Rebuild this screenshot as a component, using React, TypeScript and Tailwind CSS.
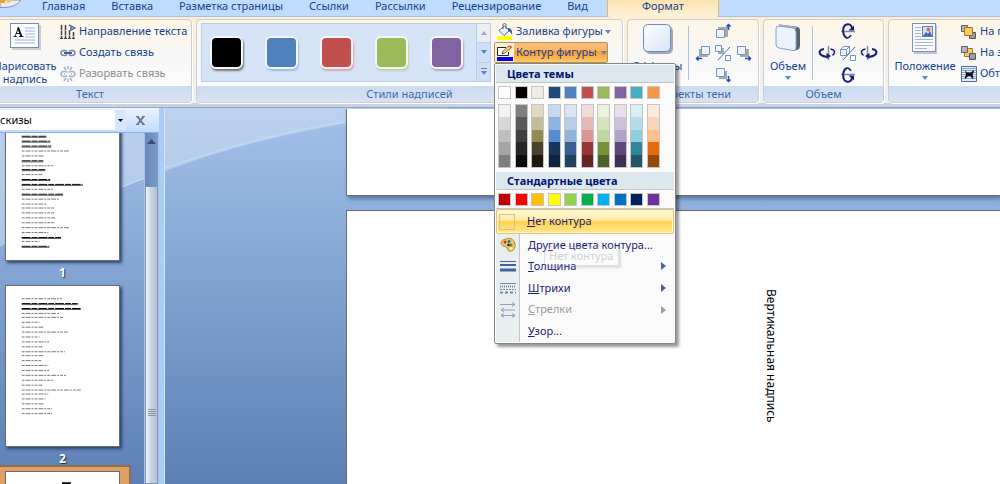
import type { ReactNode } from 'react';
import clsx from 'clsx';

const tabs = ['Главная', 'Вставка', 'Разметка страницы', 'Ссылки', 'Рассылки', 'Рецензирование', 'Вид'];

const styles = [
  { name: 'Черный', color: 'bg-black', shadow: 'shadow-[1px_2px_2px_#777]' },
  { name: 'Синий', color: 'bg-[#4f81bd]', shadow: 'shadow-[1px_2px_2px_#9dbce0]' },
  { name: 'Красный', color: 'bg-[#c0504d]', shadow: 'shadow-[1px_2px_2px_#dba5ad]' },
  { name: 'Зеленый', color: 'bg-[#9bbb59]', shadow: 'shadow-[1px_2px_2px_#bdd0a6]' },
  { name: 'Фиолетовый', color: 'bg-[#8064a2]', shadow: 'shadow-[1px_2px_2px_#b0a6cc]' },
];

// first colour is the base one, the others are its tints and shades
const themeColors = [
  ['#ffffff', '#f2f2f2', '#d8d8d8', '#bfbfbf', '#a5a5a5', '#7f7f7f'],
  ['#000000', '#7f7f7f', '#595959', '#3f3f3f', '#262626', '#0c0c0c'],
  ['#eeece1', '#ddd9c3', '#c4bd97', '#938953', '#494429', '#1d1b10'],
  ['#1f497d', '#c6d9f0', '#8db3e2', '#548dd4', '#17365d', '#0f243e'],
  ['#4f81bd', '#dbe5f1', '#b8cce4', '#95b3d7', '#366092', '#244061'],
  ['#c0504d', '#f2dcdb', '#e5b9b7', '#d99694', '#953734', '#632423'],
  ['#9bbb59', '#ebf1dd', '#d7e3bc', '#c3d69b', '#76923c', '#4f6128'],
  ['#8064a2', '#e5e0ec', '#ccc1d9', '#b2a2c7', '#5f497a', '#3f3151'],
  ['#4bacc6', '#dbeef3', '#b7dde8', '#92cddc', '#31859b', '#205867'],
  ['#f79646', '#fdeada', '#fbd5b5', '#fac08f', '#e36c09', '#974806'],
];

const standardColors = [
  '#c00000', '#ff0000', '#ffc000', '#ffff00', '#92d050',
  '#00b050', '#00b0f0', '#0070c0', '#002060', '#7030a0',
];

// width of each text line on a thumbnail, negative for bold lines
const pageOne = [
  49, 30, 40, 26, -51, -25, -29, -30, 49, 22, -22, 32, -24, 21, -29, -62, 32, -42, 39, 25, 33, 33, 34, 33, 49, 27, -40,
  18, -28,
];
const pageTwo = [
  41, -57, -60, 38, 42, 18, 23, 47, 18, 28, 21, 44, 23, 20, 27, 28, 45, 32, 21, 60, 27, 24, 23, 31, 31,
];

function Caret() {
  return (
    <svg width="6" height="4" viewBox="0 0 6 4" className="shrink-0">
      <path d="M0 0h6L3 4z" fill="#5b86bf" />
    </svg>
  );
}

function TextBoxIcon() {
  return (
    <svg width="31" height="27" viewBox="0 0 31 27">
      <rect x="2" y="2" width="29" height="25" fill="#9aa5b8" opacity=".5" />
      <rect x=".5" y=".5" width="28" height="24" fill="#fdfeff" stroke="#6f8fbf" />
      <path d="M15 5h10M15 8h10M15 11h10M5 17h20M5 20h20" stroke="#9bb4dc" />
      <path d="M15 14h10" stroke="#9bb4dc" />
      <path d="M3.500 13.500h3M9 13.500h4.500M5 13.500L8.500 4.500M6 10.500h4.500" fill="none" stroke="#222" />
      <path d="M8 4.500l3.500 9" stroke="#111" strokeWidth="2" />
    </svg>
  );
}

function TextDirectionIcon() {
  return (
    <svg width="16" height="16" viewBox="0 0 16 16">
      <path d="M1.500 1v13M5.500 1v13" stroke="#444" strokeWidth="1.500" strokeDasharray="5 .5" />
      <path d="M9.500 7v7M13.500 8v6" stroke="#444" strokeWidth="1.500" strokeDasharray="4 .5" />
      <path d="M9 1l6 3-6 3M11 2v4" fill="none" stroke="#5a6ea6" strokeWidth="1.500" />
      <path d="M0 14.500h3M4 14.500h3M8 14.500h3M12 14.500h3" stroke="#444" />
    </svg>
  );
}

function LinkIcon({ broken }: { broken?: boolean }) {
  return (
    <svg width="16" height="16" viewBox="0 0 16 16" fill="none" stroke={broken ? '#a3b2cc' : '#7186a8'} strokeWidth="1.500">
      <path d="M7 6.500C6 5 1 5 1 8s5 3 6 1.500M9 6.500C10 5 15 5 15 8s-5 3-6 1.500" />
      {broken ? (
        <path d="M4 1l2 3M12 1l-2 3M8 0v3M4 15l2-3M12 15l-2-3M8 13v3M4 8h1M11 8h1" />
      ) : (
        <path d="M4 8h8" stroke="#4b5f86" strokeWidth="2" />
      )}
    </svg>
  );
}

function FillIcon() {
  return (
    <svg width="18" height="18" viewBox="0 0 18 18">
      <rect x="1" y="13" width="15" height="4" fill="#ffff00" />
      <path d="M3 7.500L8.500 3l5 4.500-5.500 5z" fill="#eef4fb" stroke="#5b7194" />
      <path d="M7 6V2c0-2 3-2 3 0v4" fill="none" stroke="#4a5d7c" />
      <path d="M12 5c3 0 4.500 2 4 7-1-2-2-3.500-4-4z" fill="#3a5f9c" />
    </svg>
  );
}

function OutlineIcon() {
  return (
    <svg width="18" height="18" viewBox="0 0 18 18">
      <rect x="1" y="13" width="16" height="4" fill="#0000f0" />
      <path d="M10 3.500H1.500v8h11V8" fill="#fff" stroke="#222" />
      <path d="M6 10l1-3 6-5 2 2-6 5z" fill="#f3d47c" stroke="#6d5320" strokeWidth=".8" />
      <path d="M12.500 2.500L14 1l2.500 2L15 4.500z" fill="#d7655a" />
      <path d="M6 10l.5-1.500 1 1z" fill="#222" />
    </svg>
  );
}

function EffectsIcon() {
  return (
    <svg width="32" height="32" viewBox="0 0 32 32">
      <defs>
        <linearGradient id="fx" x1="0" y1="0" x2="1" y2="1">
          <stop offset="0" stopColor="#fff" />
          <stop offset="1" stopColor="#d6e3f8" />
        </linearGradient>
      </defs>
      <rect x="3" y="3" width="28" height="28" rx="5" fill="#6d7583" opacity=".6" />
      <rect x="1.500" y="1.500" width="27" height="27" rx="4" fill="url(#fx)" stroke="#6c8cc4" />
    </svg>
  );
}

function VolumeIcon() {
  return (
    <svg width="28" height="30" viewBox="0 0 28 30">
      <path d="M5 1.500l17 2q4 .5 4 4V22q0 4-3 5l-4 1z" fill="#59616e" />
      <path d="M4 3l2.500-1.500L23 4l-2 2z" fill="#a9b3c2" />
      <path d="M5 3l14 2q3 .5 3 4v15q0 4-3 3.500L5 25q-3-.5-3-4V6q0-3.500 3-3z" fill="#edf3fd" stroke="#86a2d2" />
    </svg>
  );
}

function PositionIcon() {
  return (
    <svg width="26" height="32" viewBox="0 0 26 32">
      <rect x="2" y="2" width="23" height="29" fill="#99a3b5" opacity=".6" />
      <rect x=".5" y=".5" width="23" height="28" fill="#f8fafd" stroke="#7f93b6" />
      <path d="M3 4.500h6M3 7.500h6M3 10.500h6M3 13.500h6M3 16.500h18M3 19.500h18M3 22.500h18M3 25.500h12" stroke="#a7b3c8" />
      <rect x="10.500" y="3.500" width="10" height="10" fill="#cfe2f8" stroke="#5f7fb4" />
      <path d="M11 13l3-4 2 2 2-3 2 5z" fill="#4469a6" />
      <circle cx="16.500" cy="6.500" r="2" fill="#e2703c" />
    </svg>
  );
}

const nudgePaths = {
  up: { shadow: 'M4 5h10v10H4z', face: 'M2.500 7.500h8v8h-8z', arrow: 'M14.500 2v6M12.500 4.500l2-2 2 2' },
  down: { shadow: 'M5 5h8v8H5z', face: 'M2.500 2.500h8v8h-8z', arrow: 'M14.500 10v6M12.500 13.500l2 2 2-2' },
  left: { shadow: 'M5 5h9v8H5z', face: 'M7.500 2.500h8v8h-8z', arrow: 'M8 14.500H2M4.500 12.500l-2 2 2 2' },
  right: { shadow: 'M5 5h9v8H5z', face: 'M2.500 2.500h8v8h-8z', arrow: 'M10 14.500h6M13.500 12.500l2 2-2 2' },
};

function NudgeIcon({ dir }: { dir: keyof typeof nudgePaths }) {
  const { shadow, face, arrow } = nudgePaths[dir];
  return (
    <svg width="18" height="18" viewBox="0 0 18 18" fill="none">
      <path d={shadow} fill="#aaa9a6" />
      <path d={face} fill="#eef5ff" stroke="#6e93c4" />
      <path d={arrow} stroke="#1c50c0" strokeWidth="1.500" />
    </svg>
  );
}

function ToggleIcon({ cube }: { cube?: boolean }) {
  return (
    <svg width="18" height="18" viewBox="0 0 18 18" fill="none" stroke="#6e93c4">
      {cube ? (
        <path d="M1.500 5.500h6v6h-6zM1.500 5.500l3-3h6l-3 3M10.500 2.500v6l-3 3" fill="#eef5ff" />
      ) : (
        <>
          <path d="M4 4h6v6H4z" fill="#aaa9a6" stroke="none" />
          <path d="M1.500 1.500h6v6h-6z" fill="#eef5ff" />
        </>
      )}
      <path d="M11.500 11.500h5v5h-5z" fill="#fff" />
      <path d="M4 16L16 3" stroke="#4676bb" />
    </svg>
  );
}

function TiltIcon({ dir }: { dir: 'up' | 'down' | 'left' | 'right' }) {
  if (dir === 'up' || dir === 'down') {
    return (
      <svg width="18" height="18" viewBox="0 0 18 18" fill="none" className={clsx(dir === 'down' && '-scale-y-100')}>
        <path d="M2 9.500h14" stroke="#7f8ca3" strokeWidth="1.500" />
        <path d="M8 16C3 14 3 4 7.500 2.500 10 1.500 12.500 3 13 6" stroke="#1c1c7c" strokeWidth="2" />
        <path d="M9.500 8.500h5.500V3.500z" fill="#1c1c7c" />
        <path d="M8 16c2 0 3-1 4-3" stroke="#1c1c7c" strokeWidth="1.500" />
      </svg>
    );
  }
  return (
    <svg width="18" height="18" viewBox="0 0 18 18" fill="none" className={clsx(dir === 'right' && '-scale-x-100')}>
      <path d="M10.500 2v14" stroke="#7f8ca3" strokeWidth="1.500" />
      <path d="M6 5C1 6 0 9 4 11.500c2 1 4 1.500 6 1" stroke="#1c1c7c" strokeWidth="2" />
      <path d="M8.500 9v6l4.500-3z" fill="#1c1c7c" />
      <path d="M12.500 5c5 1 5 4 2 6.500" stroke="#1c1c7c" strokeWidth="1.500" />
    </svg>
  );
}

function OrderIcon({ front }: { front?: boolean }) {
  const gold = <path d="M3.500 3.500h8v8h-8z" fill="#f9c95e" stroke="#a27a25" />;
  return (
    <svg width="16" height="16" viewBox="0 0 16 16">
      {!front && gold}
      <path d="M.5 1.500h6v6h-6z" fill="#b3b5ba" stroke="#5f6167" />
      <path d="M8.500 8.500h6v6h-6z" fill="#9a9ca2" stroke="#54565c" />
      {front && gold}
    </svg>
  );
}

function WrapIcon() {
  return (
    <svg width="16" height="16" viewBox="0 0 16 16">
      <path d="M.5.5h15v15H.5z" fill="#e4edfa" stroke="#4d6ea6" />
      <path d="M1 2.500h14M1 4.500h14M1 6.500h14M1 8.500h14M1 10.500h14M1 12.500h14" stroke="#8ca6d0" />
      <path d="M4 4l2 2.500h4L12.500 4l.5 2-1.500 2 1 4.500H11L9.500 10H7l-2 2.500H3.500L5 8.500z" fill="#111" />
    </svg>
  );
}

function Group({ label, className, children }: { label: string; className?: string; children: ReactNode }) {
  return (
    <section
      className={clsx(
        'flex shrink-0 flex-col rounded-sm border border-[#cbcdd2] bg-gradient-to-b from-[#fdf6e6] via-[#f7f7f8] to-white shadow-[1px_1px_0_#fff]',
        className,
      )}
    >
      <div className="flex h-[66px] shrink-0">{children}</div>
      <h2 className="h-4 bg-gradient-to-b from-[#cbdbf1] to-[#d9e2f3] text-center leading-4 whitespace-nowrap text-[#3e6aaa]">{label}</h2>
    </section>
  );
}

function BigButton({ icon, className, children }: { icon: ReactNode; className?: string; children: ReactNode }) {
  return (
    <button type="button" className={clsx('flex flex-col items-center pt-[3px] leading-[13px]', className)}>
      <span className="flex h-9 items-start justify-center">{icon}</span>
      {children}
    </button>
  );
}

function SmallButton({ icon, disabled, children }: { icon: ReactNode; disabled?: boolean; children: ReactNode }) {
  return (
    <button
      type="button"
      disabled={disabled}
      className="flex h-[21px] items-center gap-[3px] whitespace-nowrap disabled:text-[#8d8d8d]"
    >
      {icon}
      {children}
    </button>
  );
}

function MenuHeader({ children }: { children: ReactNode }) {
  return (
    <h3 className="h-[18px] border-b border-[#c5c5c5] bg-[#dde7ee] pl-[11px] font-bold leading-[18px] text-[#00156e]">{children}</h3>
  );
}

function MenuItem({ icon, hotkey, rest, before, submenu, disabled }: {
  icon?: ReactNode;
  hotkey: string;
  rest: string;
  before?: string;
  submenu?: boolean;
  disabled?: boolean;
}) {
  return (
    <button
      type="button"
      role="menuitem"
      disabled={disabled}
      className="group flex w-full flex-1 items-center pr-2 text-left text-[#1b2177] disabled:text-[#9c9c9c]"
    >
      <span className="flex w-6 shrink-0 justify-center">{icon}</span>
      <span className="flex-1 pl-2">
        {before}
        <u>{hotkey}</u>
        {rest}
      </span>
      {submenu && (
        <svg width="5" height="8" viewBox="0 0 5 8">
          <path d="M0 0l5 4-5 4z" className="fill-[#4a62a5] group-disabled:fill-[#9c9c9c]" />
        </svg>
      )}
    </button>
  );
}

function PaletteIcon() {
  return (
    <svg width="16" height="16" viewBox="0 0 16 16">
      <path d="M6 2c5-2 9 1 9 6s-3 7-6 6c-2-1-1-3-3-4S1 9 1 6s2-3 5-4z" fill="#f0c560" stroke="#b98c32" />
      <circle cx="5" cy="5" r="1.500" fill="#c3342c" />
      <circle cx="9" cy="4.500" r="1.500" fill="#3568bd" />
      <circle cx="11" cy="8" r="1.500" fill="#2c9b45" />
      <circle cx="8.500" cy="8" r="1.300" fill="#222" />
      <circle cx="11" cy="11.500" r="1.300" fill="#fff3c8" />
    </svg>
  );
}

function OutlineMenu() {
  return (
    <div
      role="menu"
      className="absolute top-full left-0 z-10 w-[182px] rounded-xs border border-[#868686] bg-[#fafafa] p-px shadow-[3px_3px_3px_#00000066]"
    >
      <MenuHeader>Цвета темы</MenuHeader>
      <div className="flex justify-between pt-[3px] pr-[14px] pb-1 pl-[2px]">
        {themeColors.map(([base, ...tints]) => (
          <div key={base} className="flex flex-col gap-[5px]">
            <button type="button" aria-label={base} className="size-[13px] border border-[#c5c5c5]" style={{ background: base }} />
            <div className="flex h-16 w-[13px] flex-col border border-[#c5c5c5]">
              {tints.map((tint) => (
                <button key={tint} type="button" aria-label={tint} className="flex-1" style={{ background: tint }} />
              ))}
            </div>
          </div>
        ))}
      </div>
      <MenuHeader>Стандартные цвета</MenuHeader>
      <div className="flex justify-between border-b border-[#c5c5c5] pt-[3px] pr-[14px] pb-[2px] pl-[2px]">
        {standardColors.map((color) => (
          <button key={color} type="button" aria-label={color} className="size-[13px] border border-[#c5c5c5]" style={{ background: color }} />
        ))}
      </div>
      <button
        type="button"
        role="menuitem"
        className="flex h-[25px] w-full items-center rounded-xs border border-[#dcc47c] bg-[linear-gradient(#fffbe0,#ffe9a0_45%,#ffd34f_50%,#ffe68e)] pl-[2px] text-[#1b2177] inset-shadow-[0_0_1px_1px_#fff6c4]"
      >
        <span className="size-4 border border-[#d5c48a]" />
        <span className="pl-3">
          <u>Н</u>ет контура
        </span>
      </button>
      <div className="relative flex h-[108px] flex-col bg-[linear-gradient(90deg,#e9eeee_23px,#c5c5c5_23px,#c5c5c5_24px,transparent_24px)]">
        <MenuItem icon={<PaletteIcon />} before="Дру" hotkey="г" rest="ие цвета контура..." />
        <MenuItem
          icon={
            <svg width="16" height="12" viewBox="0 0 16 12" stroke="#45649f">
              <path d="M0 1.500h16" />
              <path d="M0 5h16" strokeWidth="2" />
              <path d="M0 10h16" strokeWidth="3" />
            </svg>
          }
          hotkey="Т"
          rest="олщина"
          submenu
        />
        <MenuItem
          icon={
            <svg width="16" height="12" viewBox="0 0 16 12" stroke="#7287ad">
              <path d="M0 1.500h16" />
              <path d="M0 4.500h16" strokeDasharray="1 1" strokeWidth="2" />
              <path d="M0 7.500h16" strokeDasharray="2 1" />
              <path d="M0 10.500h16" strokeDasharray="3 2" strokeWidth="2" />
            </svg>
          }
          hotkey="Ш"
          rest="трихи"
          submenu
        />
        <MenuItem
          icon={
            <svg width="16" height="16" viewBox="0 0 16 16" fill="none" stroke="#8fa2c2">
              <path d="M0 2.500h15M12 .5l3 2-3 2M15 8H1M4 6L1 8l3 2M1 13.500h14M4 11.500l-3 2 3 2M12 11.500l3 2-3 2" />
            </svg>
          }
          hotkey="С"
          rest="трелки"
          submenu
          disabled
        />
        <MenuItem hotkey="У" rest="зор..." />
        {/* tooltip fading out over the items */}
        <span
          role="tooltip"
          className="absolute top-3 left-12 rounded-xs border border-[#999] bg-white/50 px-1 leading-[18px] text-[#555] opacity-25 shadow-[2px_2px_2px_#888]"
        >
          Нет контура
        </span>
      </div>
    </div>
  );
}

function Thumbnail({ number, lines }: { number: number; lines: number[] }) {
  return (
    <a href={`#page-${number}`} className="block w-[115px] text-center text-xs leading-6 font-bold text-white [text-shadow:1px_1px_1px_#234]">
      <svg width="115" height="162" viewBox="0 0 115 162" className="block border border-[#6c6c6c] bg-white shadow-[2px_2px_3px_#2b4470]">
        {lines.map((width, i) => {
          const y = 12 + Math.round(i * 4.87);
          return (
            <g key={i}>
              <path
                d={`M16 ${y}.5h${Math.abs(width)}`}
                stroke={width < 0 ? '#000' : '#777'}
                strokeDasharray={width < 0 ? '9 1 6 1' : '3 1 5 1 2 1'}
              />
              {width < 0 && <path d={`M16 ${y + 1}.5h${-width}`} stroke="#555" />}
            </g>
          );
        })}
      </svg>
      {number}
    </a>
  );
}

function Sidebar() {
  return (
    <aside className="flex w-[159px] shrink-0 flex-col">
      <div className="flex h-6 shrink-0 items-center bg-gradient-to-b from-[#eaf3ff] to-[#c3dbfb]">
        <div className="relative -ml-2 flex h-5 w-[134px] items-center bg-white">
          <select aria-label="Область" defaultValue="thumbs" className="h-full w-full appearance-none pl-px text-black">
            <option value="thumbs">Эскизы</option>
            <option value="map">Схема документа</option>
          </select>
          <span className="pointer-events-none absolute right-0 flex h-full w-[11px] items-center justify-center bg-[#d6e6fb]">
            <svg width="5" height="3" viewBox="0 0 5 3">
              <path d="M0 0h5L2.500 3z" />
            </svg>
          </span>
        </div>
        <button type="button" aria-label="Закрыть" className="ml-[10px]">
          <svg width="9" height="9" viewBox="0 0 9 9" stroke="#6d7887" strokeWidth="2">
            <path d="M1 0l7 9M8 0L1 9" />
            <path d="M0 .5h3M6 .5h3M0 8.500h3M6 8.500h3" strokeWidth="1" />
          </svg>
        </button>
      </div>
      <div className="flex min-h-0 flex-1 border-t border-[#7fb0f5]">
        <div className="min-w-0 flex-1 overflow-hidden pl-[5px]">
          <div className="-mt-[34px]">
            <Thumbnail number={1} lines={pageOne} />
            <Thumbnail number={2} lines={pageTwo} />
          </div>
          <div className="-mt-1.5 -ml-2 h-20 w-[134px] border-2 border-[#8d6f50] bg-[#e0a065] pt-1 pl-[6px]">
            <svg width="115" height="162" viewBox="0 0 115 162" className="border border-[#6c6c6c] bg-white">
              <path d="M57 11h9" stroke="#000" strokeWidth="2" />
            </svg>
          </div>
        </div>
        <div className="flex w-[15px] flex-col border-x border-[#a9c3e8] bg-gradient-to-r from-[#6788b8] to-[#7b9bc9]">
          <svg viewBox="0 0 13 53" className="h-[53px]">
            <path d="M2 11l4.500-5 4.500 5z" fill="#3e4d6d" />
          </svg>
          <div className="flex flex-1 flex-col items-center border border-[#8295b3] bg-gradient-to-r from-[#f1f4f8] via-[#c5d2e0] to-[#b2c2d4] pt-[222px]">
            <svg width="8" height="9" viewBox="0 0 8 9" stroke="#8795a8">
              <path d="M0 .5h8M0 2.500h8M0 4.500h8M0 6.500h8" />
            </svg>
          </div>
        </div>
      </div>
    </aside>
  );
}

export default function App() {
  return (
    <div className="flex h-screen flex-col overflow-hidden bg-[#bfdbff] font-['Noto_Sans',sans-serif] text-[11px] text-[#15428b]">
      <nav className="relative flex h-[17px] shrink-0 border-b border-[#a9bfdc] pl-[29px]">
        <svg width="22" height="8" viewBox="0 0 22 8" className="absolute top-0 left-0">
          <path d="M0 7.500C9 8 17 6 21 0H0z" fill="#e8ebf0" stroke="#8592a8" />
          <path d="M0 0h5v3H0z" fill="#f0a22e" />
          <path d="M7 0h5l-3 3H7z" fill="#f6c65b" />
        </svg>
        {tabs.map((tab) => (
          <a key={tab} href="#" className="px-[13px] leading-3 whitespace-nowrap">
            {tab}
          </a>
        ))}
        <a
          href="#"
          aria-current="page"
          className="ml-1.5 -mb-px w-28 rounded-b-xs border-x border-[#e3b975] bg-gradient-to-b from-[#fbe3b0] to-[#fdf2d6] text-center leading-3"
        >
          Формат
        </a>
      </nav>

      <div className="flex h-[90px] shrink-0 gap-1 border-b-4 border-[#c9d1de] bg-gradient-to-b from-[#fdf0d2] to-[#eef0f4] pt-[2px]">
        <Group label="Текст" className="-ml-3 w-[204px]">
          <BigButton icon={<TextBoxIcon />} className="ml-[6px] w-[60px]">
            <span className="-mt-px pt-px">
              Нарисовать
              <br />
              надпись
            </span>
          </BigButton>
          <div className="ml-[5px] pt-px">
            <SmallButton icon={<TextDirectionIcon />}>Направление текста</SmallButton>
            <SmallButton icon={<LinkIcon />}>Создать связь</SmallButton>
            <SmallButton icon={<LinkIcon broken />} disabled>
              Разорвать связь
            </SmallButton>
          </div>
        </Group>

        <Group label="Стили надписей" className="w-[427px] grow-0">
          <div className="mt-[3px] ml-1 flex h-[59px] w-[290px] border border-[#b9d0ed] bg-[#d5e5f7]">
            <div className="flex flex-1 items-center gap-[22px] pl-2">
              {styles.map((style) => (
                <button
                  key={style.name}
                  type="button"
                  aria-label={style.name}
                  className={clsx('size-[33px] rounded-md border-2 border-[#f4f6fa]', style.color, style.shadow)}
                />
              ))}
            </div>
            <div className="flex w-[14px] flex-col divide-y divide-[#b9d0ed] border-l border-[#b9d0ed] bg-[#cfe0f6]">
              <button type="button" aria-label="Вверх" className="flex flex-1 items-center justify-center bg-[#eceef1]">
                <svg width="6" height="4" viewBox="0 0 6 4">
                  <path d="M0 4h6L3 0z" fill="#a9adb5" />
                </svg>
              </button>
              <button type="button" aria-label="Вниз" className="flex flex-1 items-center justify-center">
                <Caret />
              </button>
              <button type="button" aria-label="Дополнительно" className="flex flex-1 flex-col items-center justify-center gap-px">
                <svg width="6" height="7" viewBox="0 0 6 7">
                  <path d="M0 0h6v1H0zM0 3h6L3 7z" fill="#5b86bf" />
                </svg>
              </button>
            </div>
          </div>
          <div className="ml-[3px] pt-px">
            <button type="button" className="flex h-[21px] items-center gap-[2px] pl-[2px] whitespace-nowrap">
              <FillIcon />
              Заливка фигуры
              <Caret />
            </button>
            <div className="relative">
              <button
                type="button"
                aria-haspopup="menu"
                aria-expanded="true"
                className="flex h-[21px] w-[114px] items-center gap-[2px] rounded-xs border border-[#b59257] bg-[linear-gradient(#f5bf82,#fbb660_40%,#f79a35_45%,#fdc964)] whitespace-nowrap"
              >
                <span className="flex h-full items-center bg-[#fdf0d0] pl-px">
                  <OutlineIcon />
                </span>
                Контур фигуры
                <span className="pl-[2px]">
                  <Caret />
                </span>
              </button>
              <OutlineMenu />
            </div>
          </div>
        </Group>

        <Group label="Эффекты тени" className="w-[132px]">
          <BigButton icon={<EffectsIcon />} className="w-[60px]">
            Эффекты
          </BigButton>
          <div className="my-[6px] border-l border-[#a9c0de]" />
          <div className="grid flex-1 grid-cols-3 place-items-center px-1">
            <span />
            <NudgeIcon dir="up" />
            <span />
            <NudgeIcon dir="left" />
            <ToggleIcon />
            <NudgeIcon dir="right" />
            <span />
            <NudgeIcon dir="down" />
          </div>
        </Group>

        <Group label="Объем" className="w-[121px]">
          <BigButton icon={<VolumeIcon />} className="w-12">
            Объем
            <span className="pt-1">
              <Caret />
            </span>
          </BigButton>
          <div className="my-[6px] border-l border-[#a9c0de]" />
          <div className="grid flex-1 grid-cols-3 place-items-center px-1">
            <span />
            <TiltIcon dir="up" />
            <span />
            <TiltIcon dir="left" />
            <ToggleIcon cube />
            <TiltIcon dir="right" />
            <span />
            <TiltIcon dir="down" />
          </div>
        </Group>

        <Group label="" className="min-w-[300px] flex-1">
          <BigButton icon={<PositionIcon />} className="w-[72px]">
            Положение
            <span className="pt-1">
              <Caret />
            </span>
          </BigButton>
          <div className="pt-px">
            <SmallButton icon={<OrderIcon front />}>На передний план</SmallButton>
            <SmallButton icon={<OrderIcon />}>На задний план</SmallButton>
            <SmallButton icon={<WrapIcon />}>Обтекание текстом</SmallButton>
          </div>
        </Group>
      </div>

      <div className="relative flex min-h-0 flex-1 bg-gradient-to-b from-[#a3c2ea] to-[#5c80b5]">
        <svg className="absolute top-0 left-0" width="500" height="160" viewBox="0 0 500 160">
          <path d="M0 0h460Q280 20 165 64T0 140z" fill="#d6e2f6" opacity=".5" />
          <path d="M165 61Q270 25 345 15M165 64Q120 78 60 108" fill="none" stroke="#cfdff5" opacity=".7" />
        </svg>
        <div className="relative flex min-w-0 flex-1 border-t border-[#8ba7d2]">
          <Sidebar />
          <div className="w-[6px] shrink-0 border-r border-[#d5e6fc] bg-[#a9cdfb]" />
          <main className="flex min-w-0 flex-1 flex-col gap-[14px] pt-px pl-[181px] text-black">
            <div className="h-[87px] shrink-0 border-b border-l border-[#6c6c6c] bg-white shadow-[2px_3px_4px_#2b447088]" />
            <div className="flex-1 border-t border-l border-[#6c6c6c] bg-white pt-[78px] pl-[414px]">
              <p className="text-xs leading-5 whitespace-nowrap [writing-mode:vertical-rl]">Вертикальная надпись</p>
            </div>
          </main>
        </div>
      </div>
    </div>
  );
}
